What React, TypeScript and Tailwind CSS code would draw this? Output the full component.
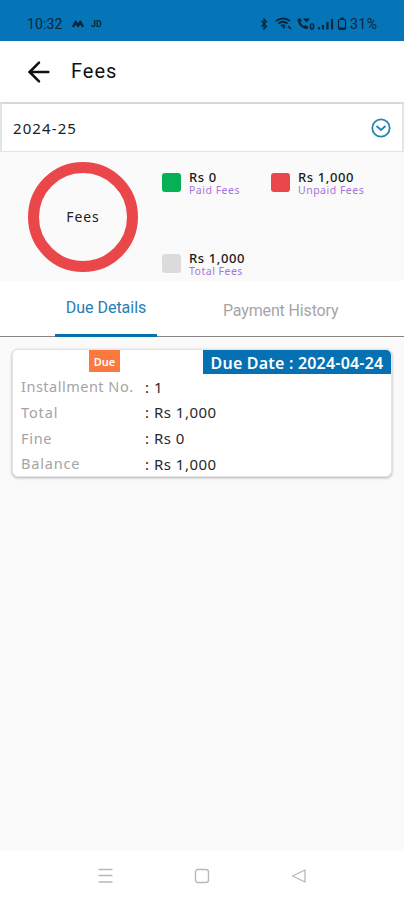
import { ArrowLeft } from 'lucide-react';

const legend = [
  { amount: 'Rs 0', label: 'Paid Fees', color: 'bg-[#06b155]', width: 'w-[109px]' },
  { amount: 'Rs 1,000', label: 'Unpaid Fees', color: 'bg-[#ea474b]', width: 'w-[120px]' },
  { amount: 'Rs 1,000', label: 'Total Fees', color: 'bg-[#dbdbdb]', width: 'w-[109px]' },
];

const rows = [
  { label: 'Installment No.', value: '1', labelStyle: 'tracking-[0.5px]' },
  { label: 'Total', value: 'Rs 1,000', labelStyle: 'tracking-[0.9px]' },
  { label: 'Fine', value: 'Rs 0', labelStyle: 'tracking-[0.7px]' },
  { label: 'Balance', value: 'Rs 1,000', labelStyle: 'tracking-[0.8px]' },
];

function StatusBar() {
  return (
    <div className="flex h-[41px] shrink-0 items-start bg-[#0575b7] pt-4 text-[#07263c]">
      <span className="ml-[27px] w-[45px] font-[Roboto] text-[14px] leading-4 tracking-[0.1px]">10:32</span>
      <svg width="12" height="8" viewBox="0 0 12 8" className="mt-1" fill="none" stroke="currentColor" strokeWidth="2.4">
        <path d="M1 7 3.7 1.800 6 6 8.3 1.800 11 7" strokeLinejoin="round" />
      </svg>
      <span className="ml-[7px] font-[Roboto] text-[9px] leading-4 font-bold">JD</span>
      <svg width="88" height="16" viewBox="0 0 88 16" className="mr-[2px] ml-auto" fill="none" stroke="currentColor" strokeWidth="1.2">
        <path d="m1.500 5 5 5.500-2.500 2.500V3l2.500 2.500-5 5" />
        <path d="M16 5q7-5 14 0M18.500 7.500q4.500-3.500 9 0M21 10q2-1.500 4 0" strokeWidth="1.800" />
        <path d="m23 12.500 2-2M28 10l3 3" strokeWidth="1.500" />
        <path d="M37.500 3c0 5 4 9.500 9.500 10l1.500-2-3-2-1.500 1c-2-1-3-2.500-3.500-4l1.500-1.500-2-2.500Z" fill="currentColor" stroke="none" />
        <path d="M43 2.500h7L46.500 6.500Z" fill="currentColor" stroke="none" />
        <rect x="50.500" y="8" width="3" height="5" rx="1" strokeWidth="1.500" />
        <path d="M59 11v2.500M63 9v4.500M67.500 6v7.500M72 3v10.500" strokeWidth="2.200" />
        <rect x="78.500" y="3.500" width="7" height="10" rx="1.500" />
        <path d="M80.500 2.500h3M79 12.500h6" strokeWidth="2" />
      </svg>
      <span className="w-[54px] font-[Roboto] text-[14px] leading-4 tracking-[0.5px]">31%</span>
    </div>
  );
}

function Summary() {
  return (
    <section className="flex h-[129px] shrink-0 bg-[#fafafa]">
      <div className="mt-[10px] ml-7 flex size-[110px] shrink-0 items-center justify-center rounded-full border-[11px] border-[#ea474b]">
        <span className="pb-0.5 text-[14px] tracking-[0.9px] text-[#202020]">Fees</span>
      </div>
      <div className="ml-6 flex flex-wrap content-start gap-y-[53px] pt-[17px]">
        {legend.map((item) => (
          <div key={item.label} className={`flex h-7 items-start ${item.width}`}>
            <span className={`mt-1 mr-2 size-[19px] shrink-0 rounded-[3px] ${item.color}`} />
            <div className="pt-px whitespace-nowrap">
              <p className="text-[13px] leading-[14px] font-medium tracking-[0.6px] text-[#181818]">{item.amount}</p>
              <p className="text-[10.5px] leading-3 tracking-[0.5px] text-[#a575dd]">{item.label}</p>
            </div>
          </div>
        ))}
      </div>
    </section>
  );
}

function Tabs() {
  return (
    <div className="flex h-14 shrink-0 border-b border-[#858585] bg-white font-[Roboto] text-[16px] leading-5">
      <button className="-mb-px ml-[55px] w-[102px] border-b-[3px] border-[#0870ab] text-[#267eb3]">
        <span className="whitespace-nowrap">Due Details</span>
      </button>
      <button className="ml-[66px] pt-1 tracking-[-0.15px] whitespace-nowrap text-[#a5a5a5]">Payment History</button>
    </div>
  );
}

function InstallmentCard() {
  return (
    <article className="mx-3 mt-3 h-[128px] overflow-hidden rounded-md border border-[#e4e4e4] bg-white shadow-[0_1px_3px_rgba(0,0,0,0.3)]">
      <div className="flex h-6 items-start justify-between">
        <span className="ml-[76px] h-[22px] w-[31px] bg-[#fb793e] text-center text-[11px] leading-6 font-semibold text-white">
          Due
        </span>
        <span className="h-6 w-[188px] bg-[#0571b2] text-center text-[16px] leading-[27px] font-semibold tracking-[0.2px] whitespace-nowrap text-white">
          Due Date : 2024-04-24
        </span>
      </div>
      <dl className="ml-[8px] text-[14.5px]">
        {rows.map((row) => (
          <div key={row.label} className="flex h-[25.8px] items-center">
            <dt className={`w-[124px] shrink-0 whitespace-nowrap text-[#a4a4a4] ${row.labelStyle}`}>{row.label}</dt>
            <dd className="text-[15px] tracking-[0.5px] text-[#292929]">: {row.value}</dd>
          </div>
        ))}
      </dl>
    </article>
  );
}

function NavigationBar() {
  return (
    <nav className="flex h-[49px] shrink-0 items-center justify-center gap-[81px] bg-white text-[#b8b8b8]">
      <svg width="16" height="16" viewBox="0 0 16 16" fill="none" stroke="currentColor" strokeWidth="1.3">
        <path d="M1.500 1.500h14M1.500 7.500h14M1.500 14h14" />
      </svg>
      <svg width="16" height="16" viewBox="0 0 16 16" fill="none" stroke="currentColor" strokeWidth="1.4">
        <rect x="1.500" y="1.500" width="13" height="13" rx="2.500" />
      </svg>
      <svg width="16" height="16" viewBox="0 0 16 16" fill="none" stroke="currentColor" strokeWidth="1.3" strokeLinejoin="round">
        <path d="M14 2v12L1.500 8Z" />
      </svg>
    </nav>
  );
}

export default function App() {
  return (
    <main className="flex h-[900px] w-[404px] flex-col overflow-hidden bg-[#fafafa] font-['Noto_Sans',sans-serif]">
      <StatusBar />
      <header className="flex h-[61px] shrink-0 items-center bg-white pl-[23px] text-[#111]">
        <ArrowLeft size={32} strokeWidth={1.9} />
        <h1 className="mb-0.5 ml-4 font-[Roboto] text-[20px] leading-6 tracking-[1px]">Fees</h1>
      </header>
      <div className="flex h-[50px] shrink-0 items-center justify-between border-x-2 border-t-2 border-b border-[#e4e4e4] border-t-[#d8d8d8] bg-white pr-[11px] pl-[11px]">
        <span className="pt-0.5 text-[15px] tracking-[1.1px] text-[#202020]">2024-25</span>
        <svg width="20" height="20" viewBox="0 0 20 20" fill="none" stroke="#2683b7" strokeWidth="1.800">
          <circle cx="10" cy="10" r="8.700" />
          <path d="m5.500 8 4.500 4 4.500-4" />
        </svg>
      </div>
      <Summary />
      <Tabs />
      <div className="flex-1">
        <InstallmentCard />
      </div>
      <NavigationBar />
    </main>
  );
}
